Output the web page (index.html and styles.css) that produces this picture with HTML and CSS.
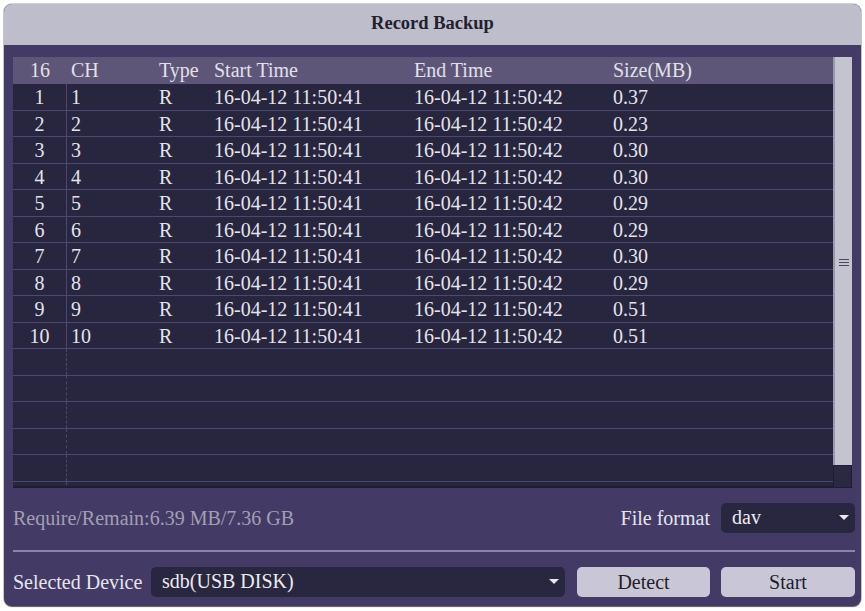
FILE: index.html
```html
<!DOCTYPE html>
<html>
<head>
<meta charset="utf-8">
<link rel="stylesheet" href="styles.css">
</head>
<body>
<div class="window">
  <div class="titlebar">Record Backup</div>
  <div class="content">
    <div class="tablewrap">
      <div class="table">
        <div class="row head"><div class="c c1">16</div><div class="c">CH</div><div class="c">Type</div><div class="c">Start Time</div><div class="c">End Time</div><div class="c">Size(MB)</div></div>
        <div class="row"><div class="c c1">1</div><div class="c">1</div><div class="c">R</div><div class="c">16-04-12 11:50:41</div><div class="c">16-04-12 11:50:42</div><div class="c">0.37</div></div>
        <div class="row"><div class="c c1">2</div><div class="c">2</div><div class="c">R</div><div class="c">16-04-12 11:50:41</div><div class="c">16-04-12 11:50:42</div><div class="c">0.23</div></div>
        <div class="row"><div class="c c1">3</div><div class="c">3</div><div class="c">R</div><div class="c">16-04-12 11:50:41</div><div class="c">16-04-12 11:50:42</div><div class="c">0.30</div></div>
        <div class="row"><div class="c c1">4</div><div class="c">4</div><div class="c">R</div><div class="c">16-04-12 11:50:41</div><div class="c">16-04-12 11:50:42</div><div class="c">0.30</div></div>
        <div class="row"><div class="c c1">5</div><div class="c">5</div><div class="c">R</div><div class="c">16-04-12 11:50:41</div><div class="c">16-04-12 11:50:42</div><div class="c">0.29</div></div>
        <div class="row"><div class="c c1">6</div><div class="c">6</div><div class="c">R</div><div class="c">16-04-12 11:50:41</div><div class="c">16-04-12 11:50:42</div><div class="c">0.29</div></div>
        <div class="row"><div class="c c1">7</div><div class="c">7</div><div class="c">R</div><div class="c">16-04-12 11:50:41</div><div class="c">16-04-12 11:50:42</div><div class="c">0.30</div></div>
        <div class="row"><div class="c c1">8</div><div class="c">8</div><div class="c">R</div><div class="c">16-04-12 11:50:41</div><div class="c">16-04-12 11:50:42</div><div class="c">0.29</div></div>
        <div class="row"><div class="c c1">9</div><div class="c">9</div><div class="c">R</div><div class="c">16-04-12 11:50:41</div><div class="c">16-04-12 11:50:42</div><div class="c">0.51</div></div>
        <div class="row"><div class="c c1">10</div><div class="c">10</div><div class="c">R</div><div class="c">16-04-12 11:50:41</div><div class="c">16-04-12 11:50:42</div><div class="c">0.51</div></div>
        <div class="row empty"><div class="c c1"></div></div>
        <div class="row empty"><div class="c c1"></div></div>
        <div class="row empty"><div class="c c1"></div></div>
        <div class="row empty"><div class="c c1"></div></div>
        <div class="row empty"><div class="c c1"></div></div>
        <div class="row empty"><div class="c c1"></div></div>
      </div>
      <div class="scrollbar">
        <div class="track"><div class="grip"><span></span><span></span><span></span></div></div>
        <div class="scrollend"></div>
      </div>
    </div>
    <div class="line1">
      <div class="info">Require/Remain:6.39 MB/7.36 GB</div>
      <div class="label">File format</div>
      <div class="select sel-format">dav<span class="caret"></span></div>
    </div>
    <div class="sep"></div>
    <div class="line2">
      <div class="label dev-label">Selected Device</div>
      <div class="select sel-device">sdb(USB DISK)<span class="caret"></span></div>
      <div class="btn">Detect</div>
      <div class="btn">Start</div>
    </div>
  </div>
</div>
</body>
</html>
```
FILE: styles.css
```css
html, body {
  margin: 0;
  padding: 0;
  background: #ffffff;
}
body {
  font-family: "Liberation Serif", "Times New Roman", serif;
  font-size: 20px;
}
.window {
  margin: 4px;
  width: 857px;
  height: 602px;
  box-sizing: border-box;
  border-radius: 8px;
  background: #433b66;
  overflow: hidden;
  display: flex;
  flex-direction: column;
  box-shadow: 0 1px 1px rgba(0,0,0,0.55), 0 0 0 1px rgba(120,120,140,0.35);
}
.titlebar {
  height: 41px;
  flex: none;
  background: #bebdcc;
  color: #23212f;
  font-weight: bold;
  font-size: 18.5px;
  display: flex;
  align-items: center;
  justify-content: center;
  padding-bottom: 3px;
  box-sizing: border-box;
}
.content {
  padding: 12px 6px 0 9px;
  display: flex;
  flex-direction: column;
}
.tablewrap {
  display: flex;
  height: 431px;
  margin-right: 3px;
}
.table {
  width: 820px;
  height: 431px;
  overflow: hidden;
  background: #28253f;
  border-bottom: 2px solid #1f1d33;
  box-sizing: border-box;
}
.row {
  display: grid;
  grid-template-columns: 54px 88px 55px 200px 199px 1fr;
  height: 26.5px;
  box-sizing: border-box;
  border-bottom: 1px solid #4d4872;
  color: #e4e3ec;
  background: #28253f;
}
.row.head {
  height: 27px;
  background: #5e5678;
  border-bottom: none;
  color: #e2e0ea;
}
.c {
  padding-left: 4px;
  line-height: 27px;
  white-space: nowrap;
}
.c1 {
  padding-left: 0;
  text-align: center;
  border-right: 1px solid #4d4872;
}
.head .c1 {
  border-right: none;
}
.empty .c1 {
  border-right: 1px dashed #4a4670;
}
.scrollbar {
  width: 19px;
  display: flex;
  flex-direction: column;
}
.track {
  flex: 1;
  background: #c4c4d0;
  border-left: 2px solid #9a98ab;
  box-sizing: border-box;
  display: flex;
  align-items: center;
  justify-content: center;
}
.grip {
  display: flex;
  flex-direction: column;
  gap: 2px;
  margin-top: 2px;
}
.grip span {
  display: block;
  width: 10px;
  height: 1px;
  background: #4a4860;
}
.scrollend {
  height: 23px;
  background: #2b2842;
  border: 1px solid #1f1d33;
  box-sizing: border-box;
}
.line1, .line2 {
  display: flex;
  align-items: center;
  height: 30px;
}
.line1 {
  margin-top: 15px;
}
.info {
  color: #a29fb4;
  flex: 1;
}
.label {
  color: #e6e5ee;
  white-space: nowrap;
}
.dev-label {
  width: 127px;
  flex: none;
}
.select {
  position: relative;
  height: 30px;
  box-sizing: border-box;
  background: #29263f;
  border-radius: 5px;
  color: #ecebf2;
  line-height: 29px;
  padding-left: 11px;
}
.sel-format {
  width: 134px;
  margin-left: 11px;
  flex: none;
}
.sel-device {
  flex: 1;
  margin-left: 11px;
}
.caret {
  position: absolute;
  right: 6px;
  top: 12px;
  width: 0;
  height: 0;
  border-left: 5px solid transparent;
  border-right: 5px solid transparent;
  border-top: 5px solid #e8e8f0;
}
.sep {
  margin-top: 17px;
  height: 2px;
  background: #8a84ae;
  margin-bottom: 15px;
}
.btn {
  width: 133px;
  flex: none;
  height: 30px;
  box-sizing: border-box;
  background: #c9c7d7;
  border-radius: 5px;
  color: #1f1e29;
  display: flex;
  align-items: center;
  justify-content: center;
  margin-left: 12px;
}
.btn + .btn {
  width: 134px;
  margin-left: 11px;
}
```
